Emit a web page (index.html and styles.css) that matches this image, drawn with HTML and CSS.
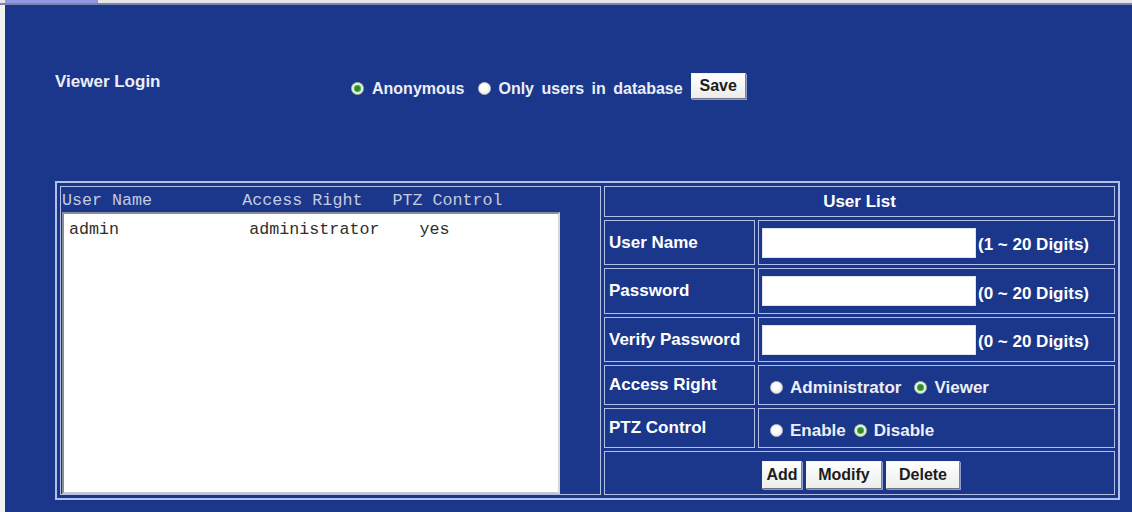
FILE: index.html
```html
<!DOCTYPE html>
<html lang="en">
<head>
<meta charset="utf-8">
<title>User Management</title>
<link rel="stylesheet" href="styles.css">
</head>
<body>
<div class="topstrip"><div class="tab"></div></div>
<div class="frame">
  <div class="login">
    <div class="login-title">Viewer Login</div>
    <div class="login-opts">
      <span class="radio on"></span><span class="opt">Anonymous</span>
      <span class="radio gap-wide"></span><span class="opt">Only users in database</span>
      <button class="btn btn-save" type="button">Save</button>
    </div>
  </div>

  <div class="panel">
    <div class="users">
      <div class="users-head">User Name         Access Right   PTZ Control</div>
      <div class="listbox">
        <div class="list-row">admin             administrator    yes</div>
      </div>
    </div>

    <div class="form">
      <div class="cell head">User List</div>

      <div class="cell label">User Name</div>
      <div class="cell field"><span class="input"></span><span class="hint">(1 ~ 20 Digits)</span></div>

      <div class="cell label">Password</div>
      <div class="cell field"><span class="input"></span><span class="hint">(0 ~ 20 Digits)</span></div>

      <div class="cell label">Verify Password</div>
      <div class="cell field"><span class="input"></span><span class="hint">(0 ~ 20 Digits)</span></div>

      <div class="cell label">Access Right</div>
      <div class="cell field choice">
        <span class="radio"></span><span class="opt">Administrator</span>
        <span class="radio on gap-wide"></span><span class="opt">Viewer</span>
      </div>

      <div class="cell label">PTZ Control</div>
      <div class="cell field choice">
        <span class="radio"></span><span class="opt">Enable</span>
        <span class="radio on gap-narrow"></span><span class="opt">Disable</span>
      </div>

      <div class="cell actions">
        <button class="btn btn-add" type="button">Add</button>
        <button class="btn btn-modify" type="button">Modify</button>
        <button class="btn btn-delete" type="button">Delete</button>
      </div>
    </div>
  </div>
</div>
</body>
</html>
```

FILE: styles.css
```css
* { box-sizing: border-box; }

html, body {
  margin: 0;
  height: 100%;
}

body {
  background: #f2f2f4;
  display: flex;
  flex-direction: column;
  font-family: "Liberation Sans", Arial, sans-serif;
  overflow: hidden;
}

/* thin tab strip along the top edge */
.topstrip {
  height: 5px;
  background: #e6e6ea;
  border-bottom: 2px solid #7c84ac;
  padding-left: 5px;
}
.tab {
  width: 93px;
  height: 3px;
  background: #9099e4;
}

/* main blue frame */
.frame {
  flex: 1;
  margin-left: 5px;
  background: #1b378b;
  padding-left: 50px;
}

/* viewer login row */
.login {
  display: flex;
  align-items: flex-start;
  margin-top: 66px;
}
.login-title {
  width: 296px;
  padding-top: 1px;
  color: #eceef8;
  font-weight: bold;
  font-size: 17px;
  line-height: 20px;
}
.login-opts {
  display: flex;
  align-items: flex-start;
  padding-top: 2px;
}
.login-opts .radio { margin-top: 9px; margin-right: 8px; }
.login-opts .opt {
  margin-top: 6px;
  font-size: 16px;
  word-spacing: 3px;
}
.login-opts .radio.gap-wide { margin-left: 14px; margin-right: 7px; }

.opt {
  color: #eceef8;
  font-weight: bold;
  line-height: 20px;
  white-space: nowrap;
}

/* radio marks */
.radio {
  flex: none;
  width: 13px;
  height: 13px;
  border-radius: 50%;
  background: radial-gradient(circle at 45% 40%, #ffffff 0 3px, #ebebe6 6.5px);
  border: 1px solid #c9c9c4;
}
.radio.on {
  background: radial-gradient(circle, #2e8a2e 0 2.2px, #5fae4c 2.8px 3.4px, #e4f1de 4px);
  border-color: #a9c9a0;
}

/* push buttons */
.btn {
  height: 26px;
  padding: 0;
  font-family: "Liberation Sans", Arial, sans-serif;
  font-weight: bold;
  font-size: 16px;
  color: #1c1c1c;
  background: linear-gradient(#ffffff, #ececea);
  border: 1px solid;
  border-color: #f4f4f4 #7f8294 #6f7284 #f4f4f4;
  box-shadow: 1px 1px 0 #8f9acb;
}
.btn-save { width: 55px; margin-left: 8px; }
.btn-add { width: 40px; height: 28px; }
.btn-modify { width: 76px; height: 28px; }
.btn-delete { width: 74px; height: 28px; }

/* user table */
.panel {
  margin-top: 82px;
  width: 1065px;
  border: 2px solid #b3bfeb;
  padding: 3px;
  display: grid;
  grid-template-columns: 541px 511px;
  gap: 3px;
}

.users {
  border: 1px solid #b3bfeb;
  display: flex;
  flex-direction: column;
}
.users-head {
  height: 25px;
  padding: 5px 0 0 1px;
  font-family: "Liberation Mono", "Courier New", monospace;
  font-size: 16.7px;
  line-height: 18px;
  color: #c6cadf;
  white-space: pre;
}
.listbox {
  flex: 1;
  width: 498px;
  margin: 0 0 0 1px;
  background: #ffffff;
  border: 2px solid;
  border-color: #8a8d99 #d8d8d8 #c8c8cc #8a8d99;
  padding: 6px 5px;
}
.list-row {
  font-family: "Liberation Mono", "Courier New", monospace;
  font-size: 16.7px;
  line-height: 19px;
  color: #2e2e2e;
  white-space: pre;
}

.form {
  display: grid;
  grid-template-columns: 151px 357px;
  grid-template-rows: 31px 45px 46px 45px 40px 40px 44px;
  gap: 3px;
}
.cell {
  border: 1px solid #b3bfeb;
  display: flex;
  align-items: center;
  color: #ffffff;
  font-weight: bold;
  font-size: 17px;
}
.cell.head {
  grid-column: 1 / 3;
  justify-content: center;
}
.cell.label {
  padding-left: 4px;
  white-space: nowrap;
}
.cell.field {
  padding-left: 3px;
}
.input {
  width: 214px;
  height: 30px;
  background: #ffffff;
  border: 1px solid #dfe2ec;
}
.hint {
  margin-left: 2px;
  margin-top: 5px;
  line-height: 20px;
  white-space: nowrap;
}

.choice { padding-top: 5px; }
.choice .radio { margin-left: 8px; margin-right: 7px; }
.choice .radio.gap-wide { margin-left: 13px; }
.choice .radio.gap-narrow { margin-left: 8px; }
.choice .opt { font-size: 17px; }

.cell.actions {
  grid-column: 1 / 3;
  padding-left: 157px;
  padding-top: 3px;
  gap: 4px;
}
```
